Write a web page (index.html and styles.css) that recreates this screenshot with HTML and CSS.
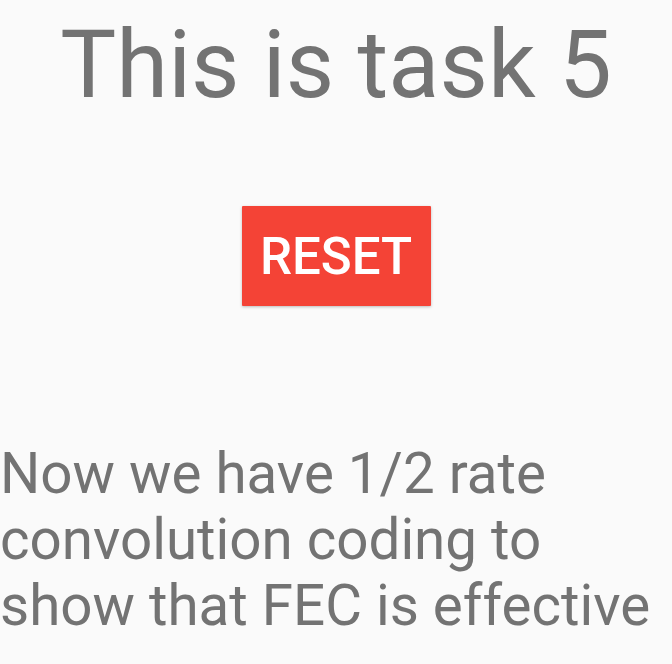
FILE: index.html
```html
<!DOCTYPE html>
<html>
<head>
<meta charset="utf-8">
<link rel="stylesheet" href="styles.css">
</head>
<body>
<main class="screen">
  <h1 class="title">This is task 5</h1>
  <button class="reset-btn">RESET</button>
  <p class="desc">Now we have 1/2 rate convolution coding to show that FEC is effective</p>
</main>
</body>
</html>
```

FILE: styles.css
```css
html, body {
  margin: 0;
  padding: 0;
  background: #fafafa;
}
.screen {
  width: 672px;
  height: 664px;
  overflow: hidden;
  display: flex;
  flex-direction: column;
  align-items: center;
  font-family: Roboto, "Noto Sans", sans-serif;
  color: #737373;
}
.title {
  margin: 9px 0 0 0;
  font-size: 94px;
  font-weight: 400;
  line-height: 112px;
  text-align: center;
  white-space: nowrap;
}
.reset-btn {
  margin-top: 85px;
  width: 189px;
  height: 100px;
  padding: 0;
  border: none;
  border-radius: 1px;
  background: #f44336;
  color: #ffffff;
  font-family: Roboto, "Noto Sans", sans-serif;
  font-size: 51px;
  font-weight: 500;
  box-shadow: 0 1px 3px rgba(0,0,0,0.25);
}
.desc {
  align-self: stretch;
  margin: 135px 0 0 0;
  font-size: 56.5px;
  line-height: 66px;
  text-align: left;
}
```
